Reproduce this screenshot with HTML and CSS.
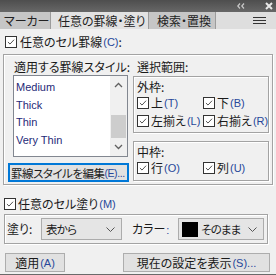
FILE: index.html
```html
<!DOCTYPE html>
<html lang="ja">
<head>
<meta charset="utf-8">
<link rel="stylesheet" href="styles.css">
</head>
<body>
<div class="panel">
  <div class="titlebar">
    <svg class="collapse" width="9" height="6" viewBox="0 0 9 6"><path d="M3 0.5 L0.8 3 L3 5.5 M7 0.5 L4.8 3 L7 5.5" fill="none" stroke="#c8c8c8" stroke-width="1.2"/></svg>
    <svg class="close" width="8" height="8" viewBox="0 0 8 8"><path d="M1 1 L7 7 M7 1 L1 7" stroke="#e8e8e8" stroke-width="2"/></svg>
  </div>
  <div class="tabs">
    <div class="tab">マーカー</div>
    <div class="tab active">任意の罫線・塗り</div>
    <div class="tab">検索・置換</div>
    <div class="tab-rest">
      <svg width="13" height="8" viewBox="0 0 13 8"><path d="M0 0.5 H13 M0 3.5 H13 M0 6.5 H13" stroke="#333" stroke-width="1"/></svg>
    </div>
  </div>
  <div class="content">
    <div class="check top-check"><span class="cb"><svg viewBox="0 0 13 13"><path d="M2.5 6.5 L5.2 9.2 L10.5 3.5" fill="none" stroke="#333" stroke-width="1.1"/></svg></span><span>任意のセル罫線</span><span class="mn">(C)</span><span>:</span></div>
    <div class="group main-group">
      <div class="left-col">
        <div class="label label-styles">適用する罫線スタイル:</div>
        <div class="listbox">
          <div class="items">
            <div class="item">Medium</div>
            <div class="item">Thick</div>
            <div class="item">Thin</div>
            <div class="item">Very Thin</div>
          </div>
          <div class="scrollbar">
            <svg class="arrow" width="9" height="6" viewBox="0 0 9 6"><path d="M1 5 L4.5 1.5 L8 5" fill="none" stroke="#606060" stroke-width="1.3"/></svg>
            <div class="track"><div class="thumb"></div></div>
            <svg class="arrow" width="9" height="6" viewBox="0 0 9 6"><path d="M1 1 L4.5 4.5 L8 1" fill="none" stroke="#606060" stroke-width="1.3"/></svg>
          </div>
        </div>
        <div class="btn btn-focus"><span>罫線スタイルを編集</span><span class="mn">(E)...</span></div>
      </div>
      <div class="right-col">
        <div class="label label-range">選択範囲:</div>
        <div class="group sub-group outer-frame">
          <div class="sub-label">外枠:</div>
          <div class="check-grid">
            <div class="check"><span class="cb"><svg viewBox="0 0 13 13"><path d="M2.5 6.5 L5.2 9.2 L10.5 3.5" fill="none" stroke="#333" stroke-width="1.1"/></svg></span><span>上</span><span class="mn">(T)</span></div>
            <div class="check"><span class="cb"><svg viewBox="0 0 13 13"><path d="M2.5 6.5 L5.2 9.2 L10.5 3.5" fill="none" stroke="#333" stroke-width="1.1"/></svg></span><span>下</span><span class="mn">(B)</span></div>
            <div class="check"><span class="cb"><svg viewBox="0 0 13 13"><path d="M2.5 6.5 L5.2 9.2 L10.5 3.5" fill="none" stroke="#333" stroke-width="1.1"/></svg></span><span>左揃え</span><span class="mn">(L)</span></div>
            <div class="check"><span class="cb"><svg viewBox="0 0 13 13"><path d="M2.5 6.5 L5.2 9.2 L10.5 3.5" fill="none" stroke="#333" stroke-width="1.1"/></svg></span><span>右揃え</span><span class="mn">(R)</span></div>
          </div>
        </div>
        <div class="group sub-group inner-frame">
          <div class="sub-label">中枠:</div>
          <div class="check-grid">
            <div class="check"><span class="cb"><svg viewBox="0 0 13 13"><path d="M2.5 6.5 L5.2 9.2 L10.5 3.5" fill="none" stroke="#333" stroke-width="1.1"/></svg></span><span>行</span><span class="mn">(O)</span></div>
            <div class="check"><span class="cb"><svg viewBox="0 0 13 13"><path d="M2.5 6.5 L5.2 9.2 L10.5 3.5" fill="none" stroke="#333" stroke-width="1.1"/></svg></span><span>列</span><span class="mn">(U)</span></div>
          </div>
        </div>
      </div>
    </div>
    <div class="check fill-check"><span class="cb"><svg viewBox="0 0 13 13"><path d="M2.5 6.5 L5.2 9.2 L10.5 3.5" fill="none" stroke="#333" stroke-width="1.1"/></svg></span><span>任意のセル塗り</span><span class="mn">(M)</span></div>
    <div class="group fill-group">
      <span class="fill-label">塗り:</span>
      <div class="select select-src"><span class="sel-text">表から</span><svg class="chev" width="9" height="5" viewBox="0 0 9 5"><path d="M0.5 0.5 L4.5 4.5 L8.5 0.5" fill="none" stroke="#555" stroke-width="1"/></svg></div>
      <span class="color-label"><span>カラー</span><span class="mn">:</span></span>
      <div class="select select-color"><span class="swatch"></span><span class="sel-text">そのまま</span><svg class="chev" width="9" height="5" viewBox="0 0 9 5"><path d="M0.5 0.5 L4.5 4.5 L8.5 0.5" fill="none" stroke="#555" stroke-width="1"/></svg></div>
    </div>
    <div class="button-row">
      <div class="btn btn-apply"><span>適用</span><span class="mn">(A)</span></div>
      <div class="btn btn-show"><span>現在の設定を表示</span><span class="mn">(S)...</span></div>
    </div>
  </div>
  <div class="bottom-line"></div>
</div>
</body>
</html>
```

FILE: styles.css
```css
* { box-sizing: border-box; }
html, body { margin: 0; padding: 0; }
body {
  width: 276px;
  height: 275px;
  overflow: hidden;
  background: #f0f0f0;
  font-family: "Noto Sans CJK JP", sans-serif;
  font-size: 12px;
  line-height: 14px;
  font-feature-settings: "palt";
  color: #1a1a1a;
}
.panel { width: 276px; height: 275px; display: flex; flex-direction: column; }
.mn { font-family: "Liberation Sans", sans-serif; font-size: 11px; color: #27479a; margin-left: 1px; }

.titlebar {
  height: 12px;
  background: linear-gradient(#4e4e4e, #676767);
  display: flex;
  align-items: center;
  justify-content: flex-end;
  gap: 19px;
  padding-right: 3px;
}
.tabs {
  height: 17px;
  display: flex;
  background: #dcdcdc;
}
.tab {
  height: 17px;
  padding: 0 6px;
  background: #c6c6c6;
  border-right: 1px solid #9c9c9c;
  line-height: 17px;
  color: #222;
  white-space: nowrap;
  overflow: hidden;
}
.tab:first-child { width: 51px; padding-left: 4px; }
.tab.active { width: 98px; background: #e2e2e2; padding-left: 7px; }
.tab:nth-child(3) { width: 67px; padding-left: 8px; }
.tab-rest {
  flex: 1;
  display: flex;
  justify-content: flex-end;
  align-items: center;
  padding-right: 10px;
  background: #dedede;
}

.content { flex: 1; display: flex; flex-direction: column; }

.check { display: flex; align-items: center; height: 14px; white-space: nowrap; }
.cb {
  width: 12px; height: 12px;
  border: 1px solid #333;
  background: #fff;
  margin-right: 2px;
  flex: none;
}
.cb svg { display: block; width: 10px; height: 10px; }

.top-check { margin: 6px 0 0 5px; }
.top-check .cb { margin-right: 3px; }

.group {
  border: 1px solid #a3a3a3;
  box-shadow: inset 1px 1px 0 #fff, 1px 1px 0 #fff;
}
.main-group {
  margin: 5px 0 0 3px;
  width: 270px;
  height: 131px;
  display: flex;
  gap: 4px;
  padding: 5px 0 0 4px;
}
.left-col { width: 121px; display: flex; flex-direction: column; }
.label { height: 14px; white-space: nowrap; }
.label-styles { padding-left: 6px; }
.listbox {
  margin: 1px 0 0 5px;
  width: 115px;
  height: 82px;
  border: 1px solid #828790;
  background: #fff;
  display: flex;
}
.items { flex: 1; padding: 3px 0 0 2px; }
.item {
  font-family: "Liberation Sans", sans-serif;
  font-size: 11px;
  height: 17.5px;
  line-height: 16px;
  color: #1f2a78;
}
.scrollbar {
  width: 17px;
  display: flex;
  flex-direction: column;
  align-items: center;
  background: #f0f0f0;
}
.arrow { margin: 6px 0 5px; flex: none; }
.scrollbar .arrow:last-child { margin: 5px 0 6px; }
.track { flex: 1; width: 100%; position: relative; }
.thumb { position: absolute; left: 1px; right: 1px; top: 22px; height: 23px; background: #cdcdcd; }

.btn {
  background: #e1e1e1;
  border: 1px solid #adadad;
  display: flex;
  align-items: center;
  justify-content: center;
  white-space: nowrap;
}
.btn-focus {
  margin-top: 6px;
  height: 19px;
  border: 2px solid #0078d7;
  justify-content: flex-start;
  padding-left: 1px;
  font-size: 11.5px;
  letter-spacing: -0.5px;
}
.btn-focus .mn { margin-left: 0; font-size: 10.5px; letter-spacing: -0.4px; }

.right-col { width: 136px; display: flex; flex-direction: column; }
.label-range { padding-left: 4px; }
.sub-group { padding: 3px 0 0 3px; }
.outer-frame { margin-top: 2px; height: 57px; }
.inner-frame { margin-top: 8px; height: 40px; }
.sub-label { height: 13px; line-height: 13px; }
.check-grid { display: grid; grid-template-columns: 66px 1fr; row-gap: 4px; margin-top: 3px; }

.fill-check { margin: 12px 0 0 4px; }
.fill-group {
  margin: 3px 0 0 4px;
  width: 264px;
  height: 30px;
  display: flex;
  align-items: center;
  padding-left: 2px;
}
.fill-label { width: 34px; }
.select {
  height: 22px;
  background: #e5e5e5;
  border: 1px solid #acacac;
  display: flex;
  align-items: center;
  position: relative;
  white-space: nowrap;
}
.sel-text { font-size: 11.5px; letter-spacing: -0.8px; }
.select .chev { position: absolute; right: 6px; top: 8px; }
.select-src { width: 81px; padding-left: 4px; }
.color-label { margin-left: 10px; width: 46px; }
.select-color { width: 86px; padding-left: 3px; }
.swatch { width: 16px; height: 15px; background: #000; margin-right: 3px; flex: none; }

.button-row { display: flex; justify-content: space-between; margin: 9px 6px 0 5px; }
.btn-apply { width: 60px; height: 19px; }
.btn-show { width: 147px; height: 19px; }

.bottom-line { height: 1px; background: #6a6a6a; }
```
